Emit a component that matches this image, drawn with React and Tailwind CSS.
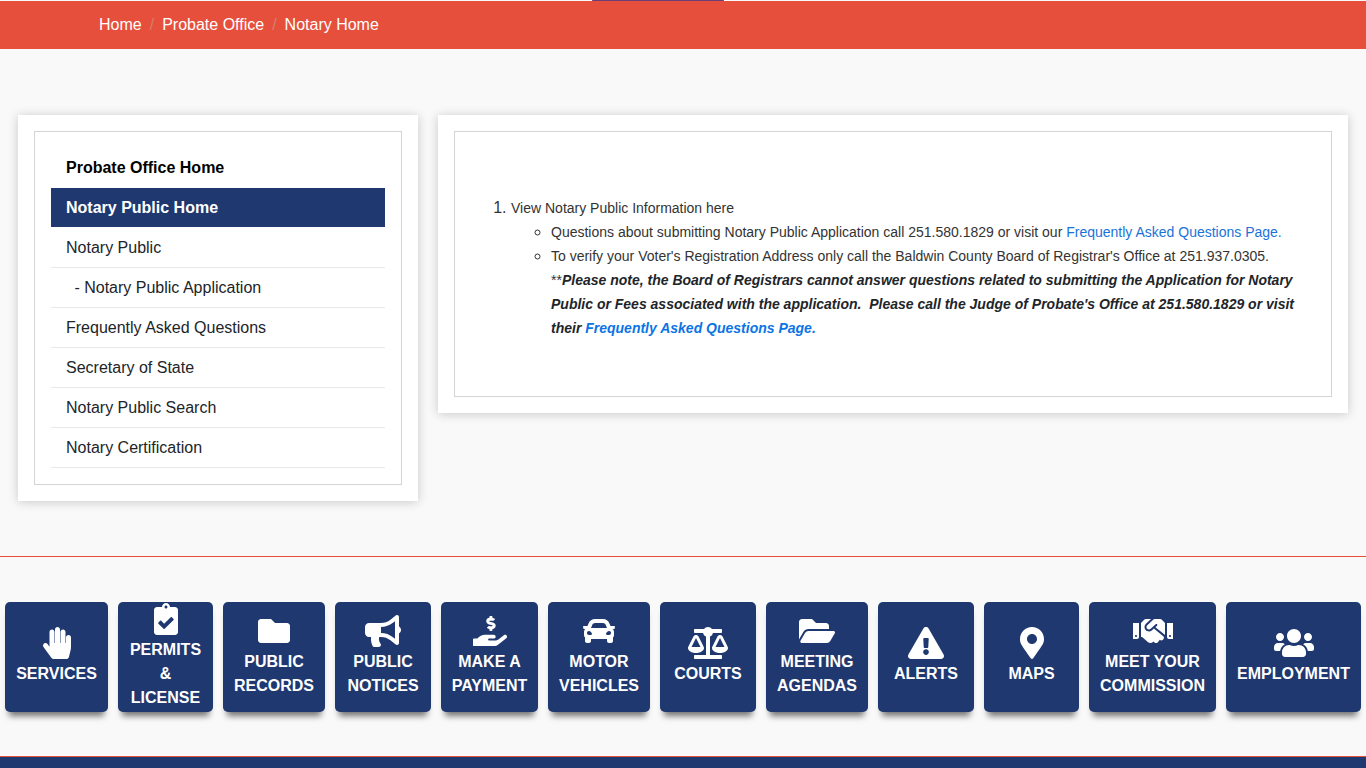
import {
  FaHandPaper,
  FaClipboardCheck,
  FaFolder,
  FaBullhorn,
  FaHandHoldingUsd,
  FaCar,
  FaBalanceScale,
  FaFolderOpen,
  FaExclamationTriangle,
  FaMapMarkerAlt,
  FaHandshake,
  FaUsers,
} from 'react-icons/fa';

const menu = [
  { label: 'Probate Office Home', bold: true },
  { label: 'Notary Public Home', active: true },
  { label: 'Notary Public', line: true },
  { label: '\u00a0- Notary Public Application', line: true, indent: true },
  { label: 'Frequently Asked Questions', line: true },
  { label: 'Secretary of State', line: true },
  { label: 'Notary Public Search', line: true },
  { label: 'Notary Certification', line: true },
];

const buttons = [
  { icon: FaHandPaper, iconClass: 'w-7', width: 'w-[103px]', lines: ['SERVICES'] },
  { icon: FaClipboardCheck, iconClass: 'w-6', width: 'w-[95px]', lines: ['PERMITS', '&', 'LICENSE'] },
  { icon: FaFolder, iconClass: 'w-8', width: 'w-[102px]', lines: ['PUBLIC', 'RECORDS'] },
  { icon: FaBullhorn, iconClass: 'w-9', width: 'w-[96px]', lines: ['PUBLIC', 'NOTICES'] },
  { icon: FaHandHoldingUsd, iconClass: 'w-[34px]', width: 'w-[97px]', lines: ['MAKE A', 'PAYMENT'] },
  { icon: FaCar, iconClass: 'w-8', width: 'w-[102px]', lines: ['MOTOR', 'VEHICLES'] },
  { icon: FaBalanceScale, iconClass: 'w-10', width: 'w-[96px]', lines: ['COURTS'] },
  { icon: FaFolderOpen, iconClass: 'w-9', width: 'w-[102px]', lines: ['MEETING', 'AGENDAS'] },
  { icon: FaExclamationTriangle, iconClass: 'w-9', width: 'w-[96px]', lines: ['ALERTS'] },
  { icon: FaMapMarkerAlt, iconClass: 'w-6', width: 'w-[95px]', lines: ['MAPS'] },
  { icon: FaHandshake, iconClass: 'w-10', width: 'w-[127px]', lines: ['MEET YOUR', 'COMMISSION'] },
  { icon: FaUsers, iconClass: 'w-10', width: 'w-[135px]', lines: ['EMPLOYMENT'] },
];

const Crumbs = () => (
  <div className="relative pt-px">
    <div className="absolute left-[592px] top-0 h-px w-[132px] rounded-full bg-[#6a3f7c]" />
    <div className="flex h-12 items-center bg-[#e64f3b] pl-[99px] text-base text-white">
      <span>Home</span>
      <span className="px-2 text-[#d0806f]">/</span>
      <span>Probate Office</span>
      <span className="px-2 text-[#d0806f]">/</span>
      <span>Notary Home</span>
    </div>
  </div>
);

const SideMenu = () => (
  <div className="w-[400px] shrink-0 self-start bg-white p-4 shadow-[0_1px_10px_rgba(0,0,0,0.2)]">
    <div className="border border-[#d4d4d4] p-4">
      {menu.map((item) => (
        <div
          key={item.label}
          className={
            item.active
              ? 'flex h-10 items-center border-b border-white bg-[#1f3870] px-[15px] font-bold text-white'
              : item.line
                ? 'flex h-10 items-center border-b border-[#e8e8e8] px-[15px] text-[#212529]'
                : 'flex h-10 items-center border-b border-white px-[15px] font-bold text-black'
          }
        >
          <span className={item.indent ? 'pl-[4px]' : ''}>{item.label}</span>
        </div>
      ))}
    </div>
  </div>
);

const Content = () => (
  <div className="w-[910px] shrink-0 self-start bg-white p-4 shadow-[0_1px_10px_rgba(0,0,0,0.2)]">
    <div className="border border-[#d4d4d4] px-4 pb-[56px] pt-[64px] text-[#333333]">
      <ol className="list-decimal pl-10 text-base leading-6">
        <li>
          <span className="text-sm">View Notary Public Information here</span>
          <ul className="list-[circle] pl-10 text-base leading-6">
            <li>
              <span className="text-sm">
                Questions about submitting Notary Public Application call 251.580.1829 or visit our{' '}
                <a className="text-[#1a73d9]">Frequently Asked Questions Page.</a>
              </span>
            </li>
            <li>
              <span className="text-sm">
                To verify your Voter's Registration Address only call the Baldwin County Board of
                Registrar's Office at 251.937.0305.
                <br />
                **
                <b className="italic text-[#212529]">
                  Please note, the Board of Registrars cannot answer questions related to submitting
                  the Application for Notary Public or Fees associated with the application.&nbsp; Please
                  call the Judge of Probate's Office at 251.580.1829 or visit their{' '}
                  <a className="text-[#0b74e5]">Frequently Asked Questions Page.</a>
                </b>
              </span>
            </li>
          </ul>
        </li>
      </ol>
    </div>
  </div>
);

const QuickLinks = () => (
  <div className="flex gap-[10px] pl-[5px] pt-[45px]">
    {buttons.map(({ icon: Icon, iconClass, width, lines }) => (
      <div
        key={lines.join(' ')}
        className={`flex h-[110px] ${width} shrink-0 flex-col items-center justify-center rounded-[5px] bg-[#1f3870] pb-px text-center text-base font-bold leading-6 text-white shadow-[0_8px_6px_-4px_rgba(0,0,0,0.55)]`}
      >
        <Icon className={`mb-[3px] h-8 ${iconClass} shrink-0`} />
        {lines.map((line) => (
          <div key={line} className="whitespace-nowrap">{line}</div>
        ))}
      </div>
    ))}
  </div>
);

export default function App() {
  return (
    <div className="flex h-[768px] flex-col overflow-hidden bg-[#f9f9f9] font-['Liberation_Sans',Arial,sans-serif]">
      <Crumbs />
      <div className="flex h-[508px] shrink-0 gap-5 border-b border-[#e64f3b] px-[18px] pt-[66px]">
        <SideMenu />
        <Content />
      </div>
      <QuickLinks />
      <div className="mt-[44px] h-[12px] border-t border-[#e64f3b] bg-[#1f3870]" />
    </div>
  );
}
